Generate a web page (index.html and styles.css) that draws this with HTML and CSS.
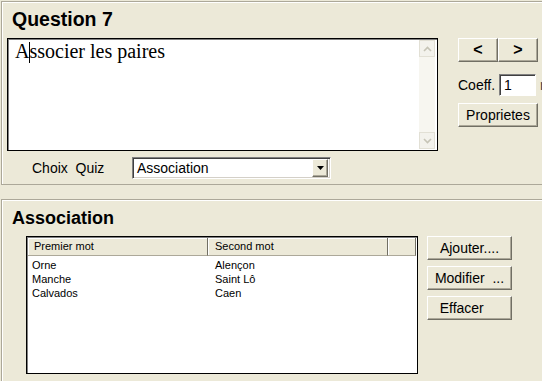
FILE: index.html
```html
<!DOCTYPE html>
<html lang="fr">
<head>
    <meta charset="UTF-8">
    <title>Question 7</title>
    <link rel="stylesheet" href="styles.css">
</head>
<body>
    <div class="panel question">
        <h1 class="title">Question 7</h1>
        <div class="question-body">
            <div class="left">
                <div class="textbox">
                    <div class="textbox-text">A<span class="caret"></span>ssocier les paires</div>
                    <div class="scrollbar">
                        <span class="scroll-btn">
                            <svg width="9" height="6" viewBox="0 0 9 6"><path d="M1 5 L4.5 1.5 L8 5" fill="none" stroke="#c6c4b6" stroke-width="1.6"/></svg>
                        </span>
                        <span class="scroll-track"></span>
                        <span class="scroll-btn">
                            <svg width="9" height="6" viewBox="0 0 9 6"><path d="M1 1 L4.5 4.5 L8 1" fill="none" stroke="#c6c4b6" stroke-width="1.6"/></svg>
                        </span>
                    </div>
                </div>
                <div class="choice-row">
                    <span class="choice-label">Choix&nbsp; Quiz</span>
                    <div class="combo">
                        <span class="combo-value">Association</span>
                        <span class="combo-btn">
                            <svg width="7" height="4" viewBox="0 0 7 4"><path d="M0 0 H7 L3.5 4 Z" fill="#000"/></svg>
                        </span>
                    </div>
                </div>
            </div>
            <div class="side">
                <div class="nav">
                    <button class="btn nav-btn">&lt;</button>
                    <button class="btn nav-btn">&gt;</button>
                </div>
                <div class="coeff">
                    <span class="coeff-label">Coeff.</span>
                    <span class="field">1</span>
                    <span class="cut">r</span>
                </div>
                <button class="btn wide">Proprietes</button>
            </div>
        </div>
    </div>

    <div class="panel assoc">
        <h2 class="title small">Association</h2>
        <div class="assoc-body">
            <div class="listbox">
                <div class="list-head">
                    <span>Premier mot</span>
                    <span>Second mot</span>
                    <span></span>
                </div>
                <div class="list-rows">
                    <div class="list-row"><span>Orne</span><span>Alençon</span></div>
                    <div class="list-row"><span>Manche</span><span>Saint Lô</span></div>
                    <div class="list-row"><span>Calvados</span><span>Caen</span></div>
                </div>
            </div>
            <div class="actions">
                <button class="btn action">Ajouter....</button>
                <button class="btn action">Modifier&nbsp; ...</button>
                <button class="btn action">Effacer&nbsp;&nbsp;&nbsp;&nbsp;</button>
            </div>
        </div>
    </div>
</body>
</html>
```

FILE: styles.css
```css
html, body {
    margin: 0;
}
body {
    background: #ece9d8;
    font-family: 'Liberation Sans', Arial, sans-serif;
    font-size: 14px;
    color: #000;
    width: 542px;
    height: 381px;
    overflow: hidden;
    padding: 1px 0 0 1px;
    box-sizing: border-box;
}
.panel {
    border: 1px solid #aca899;
    border-right: none;
    box-shadow: inset 1px 1px 0 #fff;
    box-sizing: border-box;
}
.question {
    height: 184px;
    padding: 6px 0 0 5px;
}
.title {
    margin: 0 0 0 5px;
    font-size: 19.5px;
    line-height: 22px;
    font-weight: bold;
}
.title.small {
    margin: 0;
    font-size: 18px;
    line-height: 21px;
}
.question-body {
    display: flex;
    align-items: flex-start;
    gap: 20px;
    margin-top: 8px;
}
.left {
    width: 431px;
}
.textbox {
    height: 113px;
    display: flex;
    background: #fff;
    border: 1px solid #000;
    box-shadow: inset 1px 1px 0 #808080;
    box-sizing: border-box;
}
.textbox-text {
    flex: 1;
    padding: 1px 0 0 7px;
    font-family: 'Liberation Serif', 'Times New Roman', serif;
    font-size: 20px;
    line-height: 23px;
}
.caret {
    display: inline-block;
    width: 0;
    height: 21px;
    border-left: 1px solid #000;
    vertical-align: -5px;
    margin-right: -1px;
}
.scrollbar {
    width: 16px;
    margin: 1px 2px 1px 0;
    display: flex;
    flex-direction: column;
    background: #f7f6f0;
}
.scroll-btn {
    height: 17px;
    display: flex;
    align-items: center;
    justify-content: center;
    background: #f3f2ec;
    border: 1px solid #e2e0d5;
    box-sizing: border-box;
}
.scroll-track {
    flex: 1;
}
.choice-row {
    display: flex;
    align-items: center;
    height: 22px;
    margin-top: 6px;
}
.choice-label {
    width: 100px;
    margin-left: 25px;
}
.combo {
    width: 199px;
    height: 22px;
    display: flex;
    align-items: center;
    background: #fff;
    border: 1px solid;
    border-color: #808080 #fff #fff #808080;
    box-shadow: inset 1px 1px 0 #404040, inset -1px -1px 0 #d4d0c8;
    box-sizing: border-box;
}
.combo-value {
    flex: 1;
    padding-left: 4px;
}
.combo-btn {
    width: 16px;
    height: 18px;
    margin-right: 2px;
    display: flex;
    align-items: center;
    justify-content: center;
    background: #ece9d8;
    border: 1px solid;
    border-color: #fff #716f64 #716f64 #fff;
    box-shadow: inset -1px -1px 0 #aca899;
    box-sizing: border-box;
}
.side {
    width: 80px;
}
.btn {
    background: #ece9d8;
    border: 1px solid;
    border-color: #fff #716f64 #716f64 #fff;
    box-shadow: inset -1px -1px 0 #aca899;
    font-family: 'Liberation Sans', Arial, sans-serif;
    font-size: 14px;
    color: #000;
    padding: 0;
    height: 24px;
    box-sizing: border-box;
    white-space: pre;
}
.nav {
    display: flex;
}
.nav-btn {
    width: 40px;
    font-weight: bold;
    font-size: 16px;
}
.coeff {
    display: flex;
    align-items: center;
    height: 22px;
    margin-top: 12px;
    white-space: nowrap;
}
.coeff > span {
    flex-shrink: 0;
}
.coeff-label {
    width: 41px;
}
.field {
    width: 37px;
    height: 22px;
    padding-left: 4px;
    line-height: 20px;
    background: #fff;
    border: 1px solid;
    border-color: #808080 #fff #fff #808080;
    box-shadow: inset 1px 1px 0 #404040;
    box-sizing: border-box;
}
.cut {
    margin-left: 4px;
    color: #444;
}
.wide {
    width: 80px;
    margin-top: 7px;
}
.assoc {
    margin-top: 14px;
    height: 182px;
    border-bottom: none;
    padding: 8px 0 0 10px;
}
.assoc-body {
    display: flex;
    align-items: flex-start;
    gap: 9px;
    margin-top: 7px;
    padding-left: 14px;
}
.listbox {
    width: 392px;
    height: 138px;
    background: #fff;
    border: 1px solid #000;
    box-shadow: inset 1px 1px 0 #808080;
    box-sizing: border-box;
    padding: 1px 1px 0 1px;
    font-size: 11px;
}
.list-head {
    display: grid;
    grid-template-columns: 180px 180px 1fr;
    height: 18px;
}
.list-head span {
    background: #ece9d8;
    border-right: 1px solid #716f64;
    border-bottom: 1px solid #aca899;
    box-shadow: inset 1px 1px 0 #fff;
    padding-left: 6px;
    line-height: 17px;
}
.list-head span + span {
    padding-left: 7px;
}
.list-rows {
    padding-top: 2px;
}
.list-row {
    display: grid;
    grid-template-columns: 180px 180px;
    height: 14px;
    line-height: 14px;
}
.list-row span {
    padding-left: 4px;
}
.list-row span + span {
    padding-left: 7px;
}
.actions {
    display: flex;
    flex-direction: column;
    gap: 6px;
}
.action {
    width: 85px;
}
```
